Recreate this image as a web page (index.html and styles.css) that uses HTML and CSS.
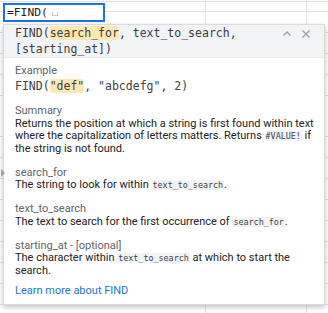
FILE: index.html
```html
<!DOCTYPE html>
<html>
<head>
    <title>FIND - formula help</title>
    <link rel="stylesheet" href="styles.css">
</head>
<body>
    <div class="sheet">
        <div class="editor">=FIND(<span class="caret"></span></div>

        <div class="tooltip">
            <div class="tip-head">
                <div class="signature">FIND(<span class="hl">search_for</span>, text_to_search,<br>[starting_at])</div>
                <div class="tip-actions">
                    <svg width="10" height="10" viewBox="0 0 10 10">
                        <path d="M1.5 6.5 L5 3 L8.5 6.5" fill="none" stroke="#9aa0a6" stroke-width="1.4"/>
                    </svg>
                    <svg width="10" height="10" viewBox="0 0 10 10">
                        <path d="M1.5 1.5 L8.5 8.5 M8.5 1.5 L1.5 8.5" fill="none" stroke="#9aa0a6" stroke-width="1.4"/>
                    </svg>
                </div>
            </div>

            <div class="tip-body">
                <div class="section">
                    <div class="label">Example</div>
                    <div class="mono">FIND(<span class="hl">"def"</span>, "abcdefg", 2)</div>
                </div>

                <div class="section">
                    <div class="label">Summary</div>
                    <div class="text">Returns the position at which a string is first found within text where the capitalization of letters matters. Returns <code>#VALUE!</code> if the string is not found.</div>
                </div>

                <div class="section arg active">
                    <div class="label">search_for</div>
                    <div class="text">The string to look for within <code>text_to_search</code>.</div>
                </div>

                <div class="section arg">
                    <div class="label">text_to_search</div>
                    <div class="text">The text to search for the first occurrence of <code>search_for</code>.</div>
                </div>

                <div class="section arg">
                    <div class="label">starting_at - [optional]</div>
                    <div class="text">The character within <code>text_to_search</code> at which to start the search.</div>
                </div>

                <a class="learn-more" href="#">Learn more about FIND</a>
            </div>
        </div>
    </div>
</body>
</html>
```

FILE: styles.css
```css
/* Base styles */
* {
    margin: 0;
    padding: 0;
    box-sizing: border-box;
}

body {
    font-family: Roboto, "Noto Sans", Arial, sans-serif;
    color: #222;
    background-color: #fff;
    width: 328px;
    height: 313px;
    overflow: hidden;
}

/* Spreadsheet grid behind the editor */
.sheet {
    height: 313px;
    padding: 3px 3px 0 3px;
    background-image:
        linear-gradient(to right, transparent 205px, #e2e2e2 205px, #e2e2e2 206px, transparent 206px),
        linear-gradient(to right, transparent 306px, #e2e2e2 306px, #e2e2e2 307px, transparent 307px),
        linear-gradient(to bottom, transparent 1px, #e2e2e2 1px, #e2e2e2 2px, transparent 2px),
        repeating-linear-gradient(to bottom, transparent 0, transparent 11px, #e2e2e2 11px, #e2e2e2 12px, transparent 12px, transparent 20.9px);
}

/* Cell editor */
.editor {
    width: 102px;
    height: 19px;
    border: 2px solid #1a73e8;
    background-color: #fff;
    padding-left: 2px;
    font-family: "DejaVu Sans Mono", monospace;
    font-size: 11.3px;
    line-height: 15px;
    color: #222;
    display: flex;
    align-items: center;
}

.caret {
    display: inline-block;
    width: 6px;
    height: 4px;
    margin: 3px 0 0 4px;
    border: 1px solid #c8c8c8;
    border-top: none;
}

/* Formula help popup */
.tooltip {
    margin-top: 2px;
    width: 322px;
    height: 281px;
    background-color: #fff;
    border: 1px solid #dadce0;
    box-shadow: 0 2px 5px rgba(0,0,0,0.25);
}

.tip-head {
    display: flex;
    justify-content: space-between;
    background-color: #f1f3f4;
    border-bottom: 1px solid #e8eaed;
    padding: 0 13px 0 11px;
}

.signature {
    font-family: "DejaVu Sans Mono", monospace;
    font-size: 11.5px;
    line-height: 16px;
    color: #3c4043;
}

.hl {
    background-color: #fce8b2;
    border-radius: 3px;
}

.tip-actions {
    display: flex;
    gap: 9px;
    padding-top: 4px;
}

.tip-body {
    padding: 7px 0 0 11px;
    display: flex;
    flex-direction: column;
    gap: 11.5px;
}

.section {
    position: relative;
}

.label {
    font-size: 11px;
    line-height: 12.5px;
    color: #5f6368;
}

.mono {
    font-family: "DejaVu Sans Mono", monospace;
    font-size: 11.5px;
    line-height: 16px;
    color: #3c4043;
}

.text {
    font-size: 11px;
    line-height: 12.5px;
    color: #222;
}

code {
    font-family: "DejaVu Sans Mono", monospace;
    font-size: 8.4px;
    line-height: 1;
    background-color: #f1f3f4;
    color: #444;
    padding: 0 1px;
}

/* Marker for the argument being typed */
.arg.active::before {
    content: "";
    position: absolute;
    left: -14px;
    top: 2px;
    border-left: 4px solid #a0a0a0;
    border-top: 4px solid transparent;
    border-bottom: 4px solid transparent;
}

.learn-more {
    font-size: 11px;
    line-height: 12.5px;
    color: #1a73e8;
    text-decoration: none;
    margin-top: -4px;
}
```
